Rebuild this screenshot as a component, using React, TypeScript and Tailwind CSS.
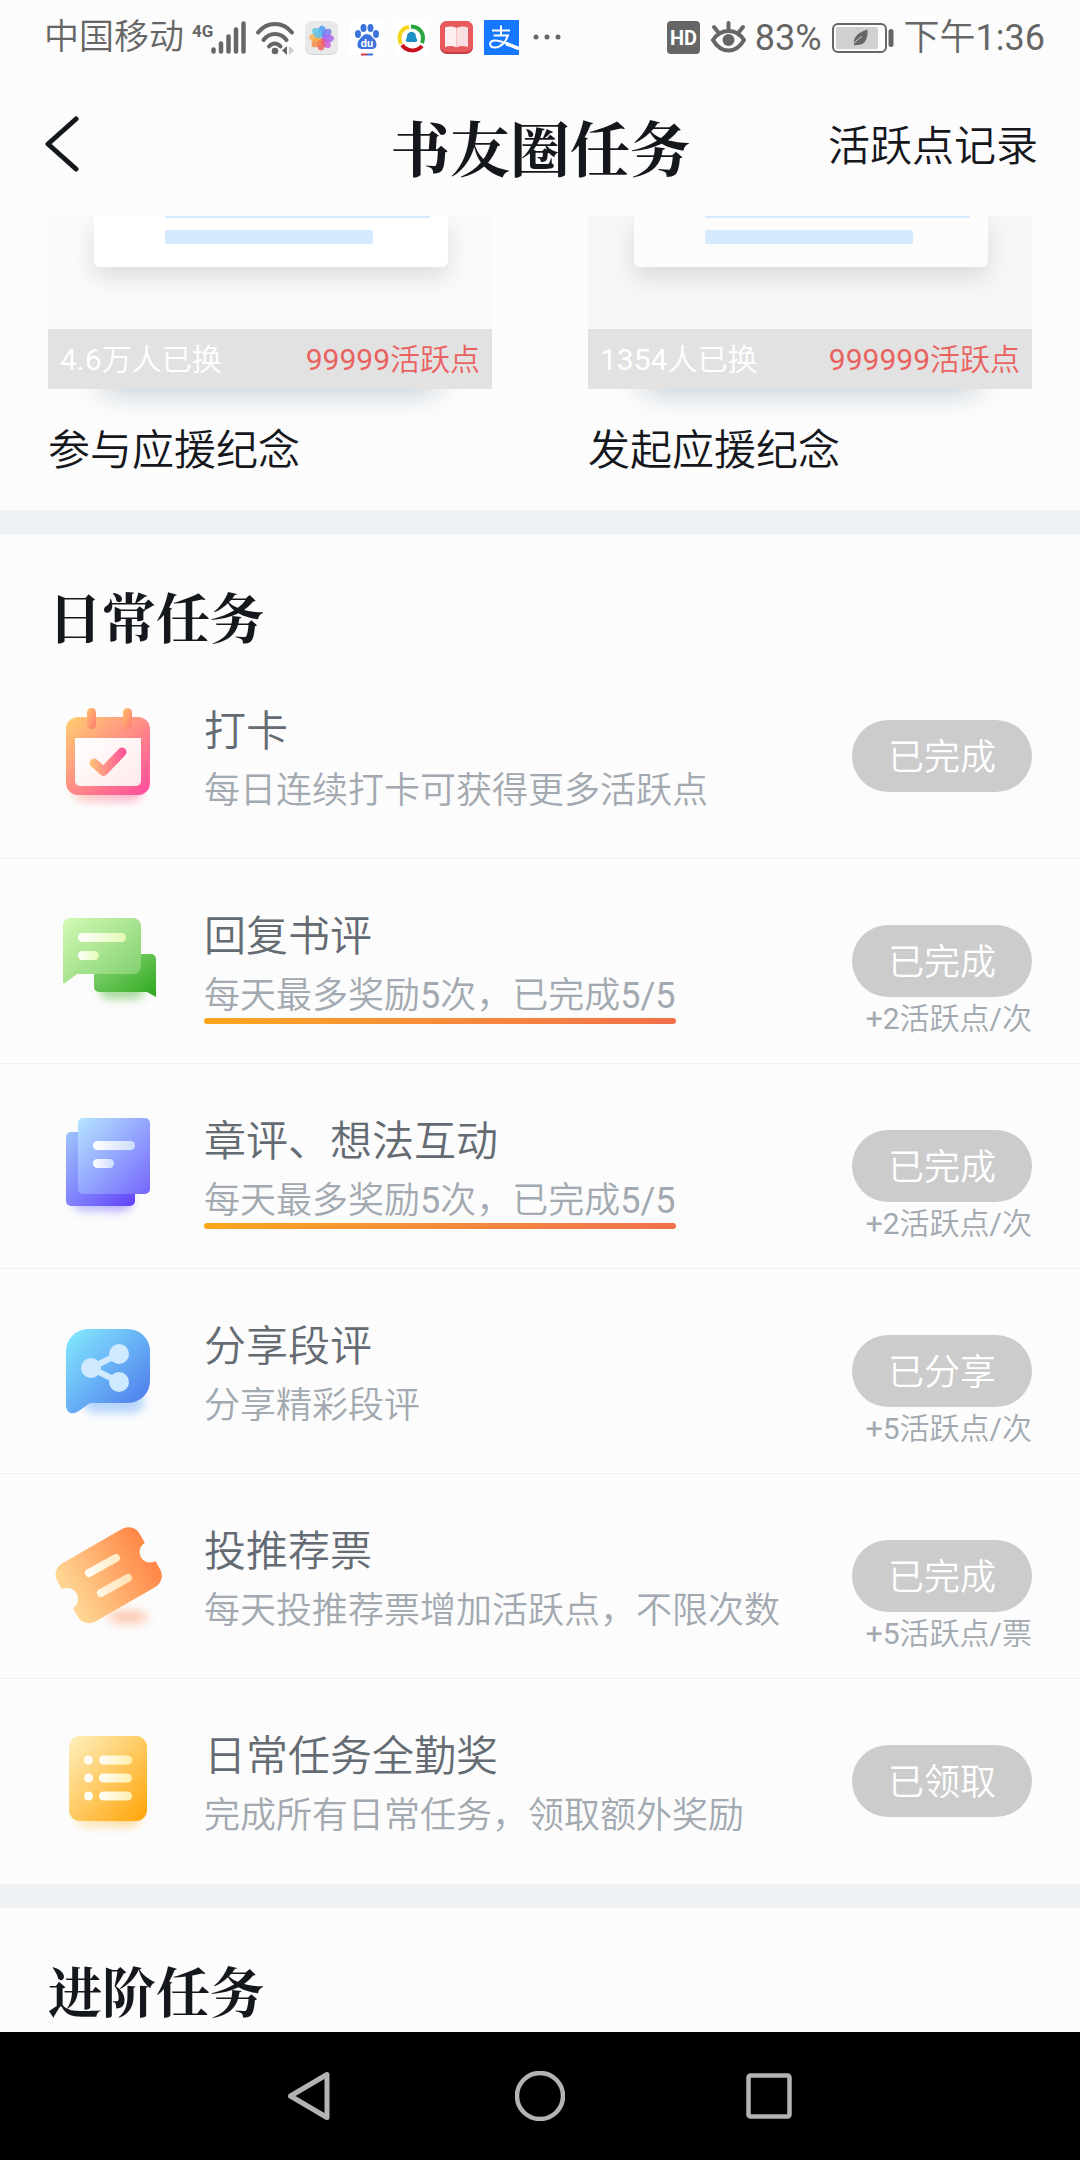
import type { ReactNode } from "react";

type Task = {
  id: string;
  title: string;
  desc: string;
  action: string;
  reward?: string;
  underlined?: boolean;
  icon: ReactNode;
};

const REWARDS = [
  { name: "参与应援纪念", count: "4.6万人已换", price: "99999活跃点", picture: "bg-[#fafafa]", sheet: "bg-white" },
  { name: "发起应援纪念", count: "1354人已换", price: "999999活跃点", picture: "bg-[#f7f7f7]", sheet: "bg-[#fcfcfc]" },
];

const PETALS = ["#4f9df5", "#7b7cf0", "#a768ec", "#c95fd8", "#f0605c", "#f78a4a", "#f9b25a", "#5cc4e8"];

function Gradient({ id, from, to, diagonal = true }: { id: string; from: string; to: string; diagonal?: boolean }) {
  return (
    <linearGradient id={id} x1="0" y1="0" x2="1" y2={diagonal ? "1" : "0"}>
      <stop offset="0" stopColor={from} />
      <stop offset="1" stopColor={to} />
    </linearGradient>
  );
}

function TaskIcon({ children }: { children: ReactNode }) {
  return (
    <svg viewBox="0 0 120 120" className="size-[120px] shrink-0" aria-hidden="true">
      {children}
    </svg>
  );
}

function CalendarIcon() {
  return (
    <TaskIcon>
      <defs>
        <Gradient id="cal" from="#ffcf6e" to="#ff4a9e" />
        <Gradient id="calPin" from="#ffbf6c" to="#ff7a72" />
        <Gradient id="calPaper" from="#ffffff" to="#ffe9ea" />
        <linearGradient id="calTick" gradientUnits="userSpaceOnUse" x1="42" y1="66" x2="78" y2="66">
          <stop offset="0" stopColor="#ffc274" />
          <stop offset="1" stopColor="#fb4f9c" />
        </linearGradient>
      </defs>
      <rect x="26" y="78" width="68" height="27" rx="10" fill="url(#cal)" opacity="0.5" className="blur-[5px]" />
      <rect x="18" y="21" width="84" height="78" rx="12" fill="url(#cal)" />
      <rect x="39" y="12" width="9" height="21" rx="4.5" fill="url(#calPin)" />
      <rect x="75" y="12" width="9" height="21" rx="4.5" fill="url(#calPin)" />
      <path d="M27 42h66v43a5 5 0 0 1-5 5H32a5 5 0 0 1-5-5z" fill="url(#calPaper)" />
      <path d="M46 67l9.500 8.500L74 56" fill="none" stroke="url(#calTick)" strokeWidth="9" strokeLinecap="round" strokeLinejoin="round" />
    </TaskIcon>
  );
}

function ReplyIcon() {
  return (
    <TaskIcon>
      <defs>
        <Gradient id="replyFront" from="#d3fab5" to="#7ccd6a" />
        <Gradient id="replyBack" from="#93d880" to="#2ca81c" />
        <Gradient id="replyLine" from="#ffffff" to="#e4fbb4" diagonal={false} />
      </defs>
      <rect x="52" y="80" width="44" height="18" rx="8" fill="#6cc25c" opacity="0.6" className="blur-[5px]" />
      <path d="M51 53h52a5 5 0 0 1 5 5v38l-9-5H51a5 5 0 0 1-5-5V58a5 5 0 0 1 5-5z" fill="url(#replyBack)" />
      <path d="M22 17h63a8 8 0 0 1 8 8v40a8 8 0 0 1-8 8H29l-12 9q-2 1-2-1V24a7 7 0 0 1 7-7z" fill="url(#replyFront)" />
      <rect x="30" y="32" width="48" height="9" rx="4.5" fill="url(#replyLine)" />
      <rect x="30" y="50" width="21" height="9" rx="4.5" fill="url(#replyLine)" />
    </TaskIcon>
  );
}

function NotesIcon() {
  return (
    <TaskIcon>
      <defs>
        <Gradient id="noteBack" from="#9fc4fc" to="#6242fa" />
        <Gradient id="noteFront" from="#b5e6ff" to="#7566fd" />
        <Gradient id="noteLine" from="#ffffff" to="#ceddfd" diagonal={false} />
      </defs>
      <rect x="24" y="80" width="60" height="25" rx="10" fill="url(#noteBack)" opacity="0.5" className="blur-[5px]" />
      <rect x="18" y="26" width="69" height="74" rx="5" fill="url(#noteBack)" />
      <rect x="30" y="12" width="72" height="76" rx="5" fill="url(#noteFront)" />
      <rect x="45" y="35" width="42" height="9" rx="4.5" fill="url(#noteLine)" />
      <rect x="45" y="53" width="21" height="9" rx="4.5" fill="url(#noteLine)" />
    </TaskIcon>
  );
}

function ShareIcon() {
  return (
    <TaskIcon>
      <defs>
        <Gradient id="share" from="#84edff" to="#4a72ea" />
      </defs>
      <rect x="36" y="80" width="60" height="22" rx="10" fill="#6faef8" opacity="0.5" className="blur-[5px]" />
      <path d="M40 18h40a22 22 0 0 1 22 22v30a22 22 0 0 1-22 22H42l-12 8.500c-6 4-12 1-12-6V40a22 22 0 0 1 22-22z" fill="url(#share)" />
      <path d="M71 43L43 57l28 14" fill="none" stroke="#cfe9ff" strokeWidth="6" />
      <circle cx="43" cy="57" r="10" fill="#cfe9ff" />
      <circle cx="71" cy="43" r="10" fill="#cfe9ff" />
      <circle cx="71" cy="71" r="10" fill="#cfe9ff" />
    </TaskIcon>
  );
}

function TicketIcon() {
  return (
    <TaskIcon>
      <defs>
        <Gradient id="ticket" from="#ffd896" to="#ff8646" diagonal={false} />
        <linearGradient id="ticketLine" gradientUnits="userSpaceOnUse" x1="40" y1="60" x2="82" y2="60">
          <stop offset="0" stopColor="#fffdf4" />
          <stop offset="1" stopColor="#ffe3b4" />
        </linearGradient>
        <mask id="ticketCut">
          <rect width="120" height="120" fill="#fff" />
          <circle cx="102" cy="36" r="10.5" fill="#000" />
          <circle cx="19" cy="83" r="11" fill="#000" />
        </mask>
      </defs>
      <ellipse cx="80" cy="101" rx="20" ry="7" fill="#ff9a6a" opacity="0.5" className="blur-[5px]" />
      <g mask="url(#ticketCut)">
        <rect x="13" y="26" width="95" height="67" rx="13" fill="url(#ticket)" transform="rotate(-30 60 59)" />
      </g>
      <path d="M41 57l27-15M53 77l27-15" stroke="url(#ticketLine)" strokeWidth="8" strokeLinecap="round" />
    </TaskIcon>
  );
}

function ListIcon() {
  return (
    <TaskIcon>
      <defs>
        <Gradient id="list" from="#fff0c0" to="#ffa405" />
        <Gradient id="listLine" from="#fffef6" to="#ffefb0" diagonal={false} />
      </defs>
      <rect x="28" y="84" width="64" height="21" rx="9" fill="url(#list)" opacity="0.5" className="blur-[5px]" />
      <rect x="21" y="15" width="78" height="85" rx="11" fill="url(#list)" />
      {[39, 57, 75].map((y) => (
        <g key={y}>
          <circle cx="40.5" cy={y} r="4.5" fill="#fffdf2" />
          <rect x="51" y={y - 4.5} width="33" height="9" rx="4.5" fill="url(#listLine)" />
        </g>
      ))}
    </TaskIcon>
  );
}

const TASKS: Task[] = [
  { id: "checkin", title: "打卡", desc: "每日连续打卡可获得更多活跃点", action: "已完成", icon: <CalendarIcon /> },
  { id: "reply", title: "回复书评", desc: "每天最多奖励5次，已完成5/5", action: "已完成", reward: "+2活跃点/次", underlined: true, icon: <ReplyIcon /> },
  { id: "notes", title: "章评、想法互动", desc: "每天最多奖励5次，已完成5/5", action: "已完成", reward: "+2活跃点/次", underlined: true, icon: <NotesIcon /> },
  { id: "share", title: "分享段评", desc: "分享精彩段评", action: "已分享", reward: "+5活跃点/次", icon: <ShareIcon /> },
  { id: "vote", title: "投推荐票", desc: "每天投推荐票增加活跃点，不限次数", action: "已完成", reward: "+5活跃点/票", icon: <TicketIcon /> },
  { id: "all", title: "日常任务全勤奖", desc: "完成所有日常任务，领取额外奖励", action: "已领取", icon: <ListIcon /> },
];

function StatusBar() {
  return (
    <div className="flex h-[76px] items-center justify-between pr-[35px] pl-11 text-[36px] leading-[48px] whitespace-nowrap text-[#666]">
      <div className="flex items-center gap-[9px]">
        <div className="flex items-center gap-2">
          <span className="text-[35px]">中国移动</span>
          {/* signal */}
          <svg viewBox="0 0 54 36" className="h-9 w-[54px]">
            <text x="0" y="17" fontSize="17" fontWeight="700" fill="#666">4G</text>
            <path d="M21.500 29.500v2M29 23.500v8M36.500 16.500v15M44 9.500v22M51.500 3.500v28" stroke="#666" strokeWidth="4.500" strokeLinecap="round" />
          </svg>
        </div>
        {/* wifi */}
        <svg viewBox="0 0 40 36" className="h-9 w-10" fill="none" stroke="#666" strokeWidth="4" strokeLinecap="round">
          <path d="M3 12.500c9-11.500 25-11.500 34 0M8.500 20c6-8 17-8 23 0M14 26.500c3.500-4 8-4 11.500 0" />
          <circle cx="20" cy="31" r="3.300" fill="#666" stroke="none" />
          <path d="M32 26v9l-5-4.500z" fill="#666" stroke="none" />
          <path d="M34 26v9l5-4.500z" fill="#ccc" stroke="none" />
        </svg>
        {/* gallery */}
        <svg viewBox="0 0 36 36" className="size-9">
          <rect x="1" y="2" width="33" height="33" rx="7" fill="#d4d4d4" />
          <rect x="1" y="1" width="33" height="33" rx="7" fill="#e9e9e9" />
          {PETALS.map((color, i) => (
            <ellipse key={color} cx="18" cy="11.500" rx="4" ry="6" fill={color} opacity="0.85" transform={`rotate(${i * 45} 17.500 18)`} />
          ))}
        </svg>
        {/* paw */}
        <svg viewBox="0 0 36 36" className="size-9">
          <rect x="1" y="1" width="34" height="34" fill="#fff" />
          <g fill="#3c73dd">
            <ellipse cx="9" cy="14" rx="3" ry="4" />
            <ellipse cx="14.500" cy="8" rx="3" ry="4" />
            <ellipse cx="21.500" cy="8" rx="3" ry="4" />
            <ellipse cx="27" cy="14" rx="3" ry="4" />
            <path d="M18 14c3.500 0 5 3 7.500 5.500s3.500 9-2 9.500h-11c-5.500-.5-4.500-7-2-9.500S14.500 14 18 14z" />
          </g>
          <text x="18" y="27" fontSize="11" fontWeight="700" fill="#fff" textAnchor="middle">du</text>
          <path d="M12 34.500h6" stroke="#d33c4c" strokeWidth="2" />
          <path d="M18 34.500h6" stroke="#3c73dd" strokeWidth="2" />
        </svg>
        {/* tri-colour ring */}
        <svg viewBox="0 0 36 36" className="size-9" fill="none" strokeWidth="4">
          <rect x="1" y="1" width="34" height="34" fill="#fff" />
          <path d="M7 24C3 15 8 8 15 7" stroke="#f3d51c" />
          <path d="M17 6.500C27 7 31 15 28 23" stroke="#2aa53e" />
          <path d="M8 25c5 7 15 7 20 1" stroke="#c8101e" />
          <path d="M17.500 12c3.500 0 4.500 2.500 4.500 5l1.500 4-2 1h-8l-2-1 1.500-4c0-2.500 1-5 4.500-5z" fill="#1d8fc8" stroke="none" />
        </svg>
        {/* reader */}
        <svg viewBox="0 0 36 36" className="size-9">
          <rect x="1" y="1" width="33" height="33" rx="7" fill="#c93c42" />
          <rect x="1" y="1" width="33" height="31" rx="7" fill="#e95a5c" />
          <path d="M6 7.500c4-1.500 8-1.500 11.500.500v19.500c-3.500-2-7.500-2-11.500-.500z" fill="#fdeff0" />
          <path d="M29 7.500c-4-1.500-8-1.500-11.500.500v19.500c3.500-2 7.500-2 11.500-.500z" fill="#fadfe2" />
        </svg>
        {/* pay */}
        <svg viewBox="0 0 36 36" className="size-9" fill="none" stroke="#fff" strokeWidth="2">
          <rect width="35" height="35" fill="#1677ff" stroke="none" />
          <path d="M8 10.500h18M17 5.500v10M9.500 15.500h14.500c-2 6-7 12-13 12-6.500 0-6.500-7 0-7 7 0 13 4 24 8" />
          <path d="M22 23.500c4 1.500 8 3.500 13 5" strokeWidth="3.500" />
        </svg>
        <svg viewBox="0 0 36 36" className="size-9" fill="#666">
          <circle cx="7" cy="17" r="2.500" />
          <circle cx="18" cy="17" r="2.500" />
          <circle cx="29" cy="17" r="2.500" />
        </svg>
      </div>

      <div className="flex items-center gap-[9px]">
        <svg viewBox="0 0 36 36" className="size-9">
          <rect x="2" y="1" width="33" height="33" rx="4" fill="#666" />
          <text x="18.500" y="25" fontSize="20" fontWeight="700" fill="#fff" textAnchor="middle">HD</text>
        </svg>
        {/* eye comfort */}
        <svg viewBox="0 0 36 36" className="size-9" fill="none" stroke="#666" strokeWidth="4" strokeLinecap="round">
          <path d="M3 20c8-12 23-12 31 0-8 14-23 14-31 0z" />
          <path d="M18.500 3v6M4 7l4 5M33 7l-4 5" />
          <circle cx="18.500" cy="20" r="6" fill="#666" stroke="none" />
        </svg>
        <span>83%</span>
        {/* battery */}
        <svg viewBox="0 0 64 36" className="h-9 w-16">
          <rect x="2" y="4" width="53" height="28" rx="5" fill="none" stroke="#666" strokeWidth="2" />
          <rect x="5" y="7" width="42" height="22" rx="2" fill="#d0d0d0" />
          <path d="M36.500 9.500c.5 9-2 15-9.500 15.500-1.500 0-3-.5-4 .5-1.500-8 3.500-13 13.500-16z" fill="#666" />
          <path d="M20.500 27.500c2-5 6-8 10.500-11" stroke="#d0d0d0" strokeWidth="1" fill="none" />
          <rect x="57.500" y="9" width="5" height="18" rx="2.500" fill="#666" />
        </svg>
        <span>下午1:36</span>
      </div>
    </div>
  );
}

function SectionTitle({ children }: { children: ReactNode }) {
  return (
    <h2 className="px-12 pt-[46px] pb-0.5 font-['Noto_Serif_CJK_SC','Noto_Sans_CJK_SC',serif] text-[54px] leading-[72px] font-bold text-[#14171c]">
      {children}
    </h2>
  );
}

function TaskRow({ task }: { task: Task }) {
  return (
    <li className="flex h-[205px] border-b border-[#f0f1f3] px-12 last:border-b-0">
      <div className="pt-[42px]">{task.icon}</div>
      <div className="min-w-0 flex-1 pt-12 pl-9">
        <h3 className="text-[42px] leading-[60px] text-[#646b73]">{task.title}</h3>
        <div className="mt-[7px] inline-block">
          <p className="text-[36px] leading-[44px] whitespace-nowrap text-[#a2a9b0]">{task.desc}</p>
          {task.underlined && <div className="h-1.5 rounded-full bg-linear-to-r from-[#faa61a] to-[#f2704a]" />}
        </div>
      </div>
      <div className="flex shrink-0 flex-col items-end pt-[66px]">
        <button className="h-[72px] w-[180px] rounded-full bg-[#ccc] pt-1 text-[36px] leading-[48px] text-white">{task.action}</button>
        {task.reward && <span className="mt-0.5 text-[30px] leading-[40px] text-[#a2a9b0]">{task.reward}</span>}
      </div>
    </li>
  );
}

export default function App() {
  return (
    <div className="flex min-h-screen flex-col bg-[#fcfcfc] font-[Roboto,'Noto_Sans_CJK_SC_DemiLight','Noto_Sans_CJK_SC',sans-serif]">
      <StatusBar />

      <header className="grid h-[140px] grid-cols-[1fr_auto_1fr] items-center px-[42px] text-[#14171c]">
        <button aria-label="返回" className="justify-self-start">
          <svg viewBox="0 0 40 60" className="h-[60px] w-10" fill="none" stroke="currentColor" strokeWidth="5" strokeLinecap="round" strokeLinejoin="round">
            <path d="M34 3L6 28l28 25" />
          </svg>
        </button>
        <h1 className="font-['Noto_Serif_CJK_SC','Noto_Sans_CJK_SC',serif] text-[60px] leading-[80px] font-bold">书友圈任务</h1>
        <a href="#records" className="justify-self-end pt-0.5 text-[42px] leading-[60px]">活跃点记录</a>
      </header>

      <main className="flex-1">
        <section className="grid grid-cols-2 gap-24 px-12 pb-[29px]">
          {REWARDS.map((item) => (
            <article key={item.name}>
              <div className="shadow-[0_58px_30px_-56px_#b9c6cf]">
                <div className={`h-[113px] overflow-hidden pr-11 pl-[46px] ${item.picture}`}>
                  <div className={`flex h-[51px] flex-col gap-3 rounded-b-md pr-[18px] pl-[71px] shadow-[0_10px_24px_rgba(0,0,0,0.12)] ${item.sheet}`}>
                    <div className="h-0.5 bg-[#d6eaff]" />
                    <div className="h-3.5 w-[208px] rounded-xs bg-[#d6eaff]" />
                  </div>
                </div>
                <div className="flex h-[60px] items-center justify-between bg-[#e2e2e2] px-3 pt-0.5 text-[30px] leading-[40px]">
                  <span className="text-white">{item.count}</span>
                  <span className="text-[#e9625f]">{item.price}</span>
                </div>
              </div>
              <h3 className="mt-8 text-[42px] leading-[60px] text-[#14171c]">{item.name}</h3>
            </article>
          ))}
        </section>

        <section className="border-t-24 border-[#eef1f4]">
          <SectionTitle>日常任务</SectionTitle>
          <ul>
            {TASKS.map((task) => (
              <TaskRow key={task.id} task={task} />
            ))}
          </ul>
        </section>

        <section className="border-t-24 border-[#eef1f4]">
          <SectionTitle>进阶任务</SectionTitle>
        </section>
      </main>

      <nav className="flex h-32 items-center justify-center gap-[180px] bg-black text-[#b3b3b3]">
        <button aria-label="后退">
          <svg viewBox="0 0 50 50" className="size-[50px]" fill="none" stroke="currentColor" strokeWidth="5" strokeLinejoin="round">
            <path d="M42 3.500v43L5.500 25z" />
          </svg>
        </button>
        <button aria-label="主页">
          <svg viewBox="0 0 50 50" className="size-[50px]" fill="none" stroke="currentColor" strokeWidth="4.500">
            <circle cx="25" cy="25" r="23" />
          </svg>
        </button>
        <button aria-label="最近任务">
          <svg viewBox="0 0 50 50" className="size-[50px]" fill="none" stroke="currentColor" strokeWidth="4.500">
            <rect x="3.500" y="4.500" width="41" height="41" rx="2" />
          </svg>
        </button>
      </nav>
    </div>
  );
}
